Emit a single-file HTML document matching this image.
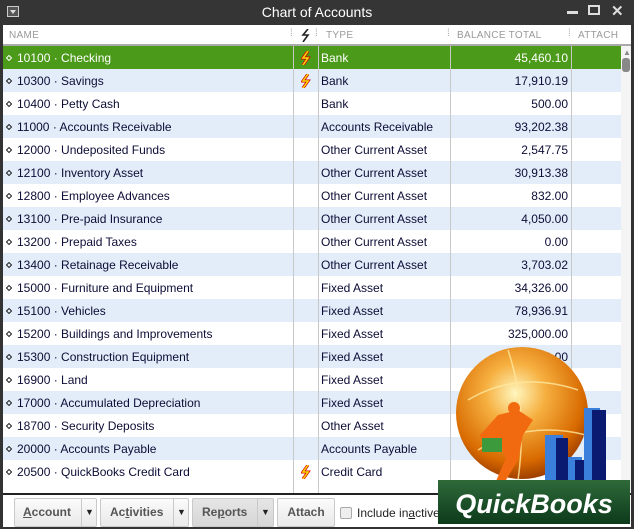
<!DOCTYPE html>
<html><head><meta charset="utf-8"><style>
*{margin:0;padding:0;box-sizing:border-box}
body{width:634px;height:529px;background:#333;font-family:"Liberation Sans",Arial,sans-serif;position:relative;overflow:hidden}
.abs{position:absolute}
.title{left:0;top:0;width:634px;height:25px;background:#353535;color:#fff;font-size:14px;text-align:center;line-height:25px}
.hdr{left:3px;top:25px;width:628px;height:21px;background:#fff;border-bottom:2px solid #aaa;font-size:10px;color:#999;letter-spacing:.3px}
.hdr span{position:absolute;top:5px}
.row{position:absolute;left:3px;width:618px;height:23px;font-size:12px;color:#0c0c36;line-height:24px}
.row span{position:absolute;top:0}
.row svg{position:absolute}
.b{background:#e2edf9}.w{background:#fff}.g{background:#4c9a1a;color:#fff}
.vl{position:absolute;top:46px;width:1px;height:448px;background:#c8c8c8}
.btn{position:absolute;top:498px;height:29px;border:1px solid #c9c9c9;border-radius:2px;background:linear-gradient(#fbfbfb,#e9e9e9);font-size:12px;font-weight:bold;color:#555;line-height:27px}
.btn i{position:absolute;top:0;height:27px;border-left:1px solid #c9c9c9;font-style:normal;font-size:9px;color:#222;text-align:center}
</style></head><body>
<div class="abs title">Chart of Accounts</div>
<div class="abs" style="left:7px;top:6px;width:12px;height:11px;border:1px solid #ccc;background:#555"><div style="margin:3px auto 0;width:0;height:0;border-left:3px solid transparent;border-right:3px solid transparent;border-top:4px solid #ddd"></div></div>
<div class="abs" style="left:567px;top:11px;width:11px;height:3px;background:#ddd"></div>
<div class="abs" style="left:588px;top:5px;width:12px;height:10px;border:2px solid #ddd"></div>
<div class="abs" style="left:611px;top:2px;color:#ddd;font-size:15px;font-weight:bold">✕</div>
<div class="abs" style="left:3px;top:25px;width:628px;height:469px;background:#fff"></div>
<div class="abs hdr"><span style="left:6px">NAME</span><svg style="position:absolute;left:298px;top:4px" width="10" height="13"><path d="M7 0 L2 6 L7 6 L2 13" stroke="#222" stroke-width="1.6" fill="none"/></svg><span style="left:323px">TYPE</span><span style="left:454px">BALANCE TOTAL</span><span style="left:575px">ATTACH</span>
<span style="left:287px;top:3px;color:#aaa">⁞</span><span style="left:312px;top:3px;color:#aaa">⁞</span><span style="left:444px;top:3px;color:#aaa">⁞</span><span style="left:565px;top:3px;color:#aaa">⁞</span></div>
<div id="rows"></div>
<script>
var d=[["10100 · Checking","Bank","45,460.10",1],["10300 · Savings","Bank","17,910.19",1],["10400 · Petty Cash","Bank","500.00"],["11000 · Accounts Receivable","Accounts Receivable","93,202.38"],["12000 · Undeposited Funds","Other Current Asset","2,547.75"],["12100 · Inventory Asset","Other Current Asset","30,913.38"],["12800 · Employee Advances","Other Current Asset","832.00"],["13100 · Pre-paid Insurance","Other Current Asset","4,050.00"],["13200 · Prepaid Taxes","Other Current Asset","0.00"],["13400 · Retainage Receivable","Other Current Asset","3,703.02"],["15000 · Furniture and Equipment","Fixed Asset","34,326.00"],["15100 · Vehicles","Fixed Asset","78,936.91"],["15200 · Buildings and Improvements","Fixed Asset","325,000.00"],["15300 · Construction Equipment","Fixed Asset","15,300.00"],["16900 · Land","Fixed Asset",""],["17000 · Accumulated Depreciation","Fixed Asset",""],["18700 · Security Deposits","Other Asset",""],["20000 · Accounts Payable","Accounts Payable",""],["20500 · QuickBooks Credit Card","Credit Card","",1]];
var h="";d.forEach(function(r,i){var c=i==0?"g":(i%2?"b":"w");var dc=i==0?"#fff":"#222";h+='<div class="row '+c+'" style="top:'+(46+i*23)+'px"><svg style="left:3px;top:9px" width="6" height="6"><path d="M3 0.5 L5.5 3 L3 5.5 L0.5 3 Z" fill="none" stroke="'+dc+'" stroke-width="1"/></svg><span style="left:14px">'+r[0]+'</span>'+(r[3]?'<svg style="left:298px;top:5px" width="10" height="14"><path d="M7 0 L2 7 L7 7 L2 14" stroke="#d00" stroke-width="3" fill="none"/><path d="M7 0 L2 7 L7 7 L2 14" stroke="#f4e000" stroke-width="1.5" fill="none"/></svg>':'')+'<span style="left:318px">'+r[1]+'</span><span style="right:53px">'+r[2]+'</span></div>'});
document.getElementById("rows").innerHTML=h;
</script>
<div class="vl" style="left:293px"></div><div class="vl" style="left:318px"></div><div class="vl" style="left:450px"></div><div class="vl" style="left:571px"></div>
<div class="abs" style="left:621px;top:46px;width:10px;height:448px;background:#f4f4f4"></div>
<div class="abs" style="left:623px;top:48px;color:#888;font-size:8px">▲</div>
<div class="abs" style="left:622px;top:58px;width:8px;height:14px;background:#888;border-radius:3px"></div>
<div class="abs" style="left:3px;top:493px;width:628px;height:2px;background:#222"></div>
<div class="abs" style="left:3px;top:495px;width:628px;height:32px;background:#fff"></div>
<div class="btn" style="left:14px;width:83px"><span style="position:absolute;left:8px"><u>A</u>ccount</span><i style="left:66px;width:16px">▼</i></div>
<div class="btn" style="left:100px;width:89px"><span style="position:absolute;left:9px">Ac<u>t</u>ivities</span><i style="left:72px;width:16px">▼</i></div>
<div class="btn" style="left:192px;width:82px;background:linear-gradient(#e6e6e6,#d6d6d6)"><span style="position:absolute;left:9px">Re<u>p</u>orts</span><i style="left:64px;width:16px">▼</i></div>
<div class="btn" style="left:277px;width:58px;text-align:center">Attach</div>
<div class="abs" style="left:340px;top:507px;width:12px;height:12px;border:1px solid #aaa;border-radius:2px;background:#eee"></div>
<div class="abs" style="left:357px;top:506px;font-size:12px;color:#222">Include in<u>a</u>ctive</div>
<svg class="abs" style="left:438px;top:340px" width="196" height="189">
<defs><radialGradient id="gl" cx="0.45" cy="0.35" r="0.65"><stop offset="0" stop-color="#fff7c0"/><stop offset="0.35" stop-color="#f6b040"/><stop offset="0.8" stop-color="#d86a00"/><stop offset="1" stop-color="#a04000"/></radialGradient>
<linearGradient id="bn" x1="0" y1="0" x2="0" y2="1"><stop offset="0" stop-color="#2f6a3a"/><stop offset="1" stop-color="#0c3a1a"/></linearGradient></defs>
<circle cx="84" cy="73" r="66" fill="url(#gl)"/>
<path d="M30 60 Q80 30 140 50 M40 110 Q90 80 148 95 M70 10 Q90 70 80 140" stroke="#ffe9a0" stroke-width="1.5" fill="none" opacity=".8"/>
<path d="M60 75 L80 70 L95 80 L85 95 L80 120 L62 150 L55 148 L68 118 L60 100 L45 105 L42 95 Z" fill="#f26a10"/>
<circle cx="76" cy="68" r="6" fill="#f26a10"/>
<rect x="44" y="98" width="20" height="14" fill="#3c9a3c"/>
<rect x="107" y="95" width="18" height="85" fill="#3a7fdc"/><rect x="118" y="98" width="12" height="82" fill="#0a1a70"/>
<rect x="130" y="117" width="14" height="63" fill="#3a7fdc"/><rect x="137" y="120" width="10" height="60" fill="#0a1a70"/>
<rect x="146" y="68" width="16" height="112" fill="#3a7fdc"/><rect x="154" y="70" width="14" height="110" fill="#0a1a70"/>
<rect x="0" y="140" width="192" height="44" fill="url(#bn)"/>
<text x="96" y="173" text-anchor="middle" font-family="Liberation Sans" font-weight="bold" font-style="italic" font-size="27" fill="#fff">QuickBooks</text>
</svg>
</body></html>
